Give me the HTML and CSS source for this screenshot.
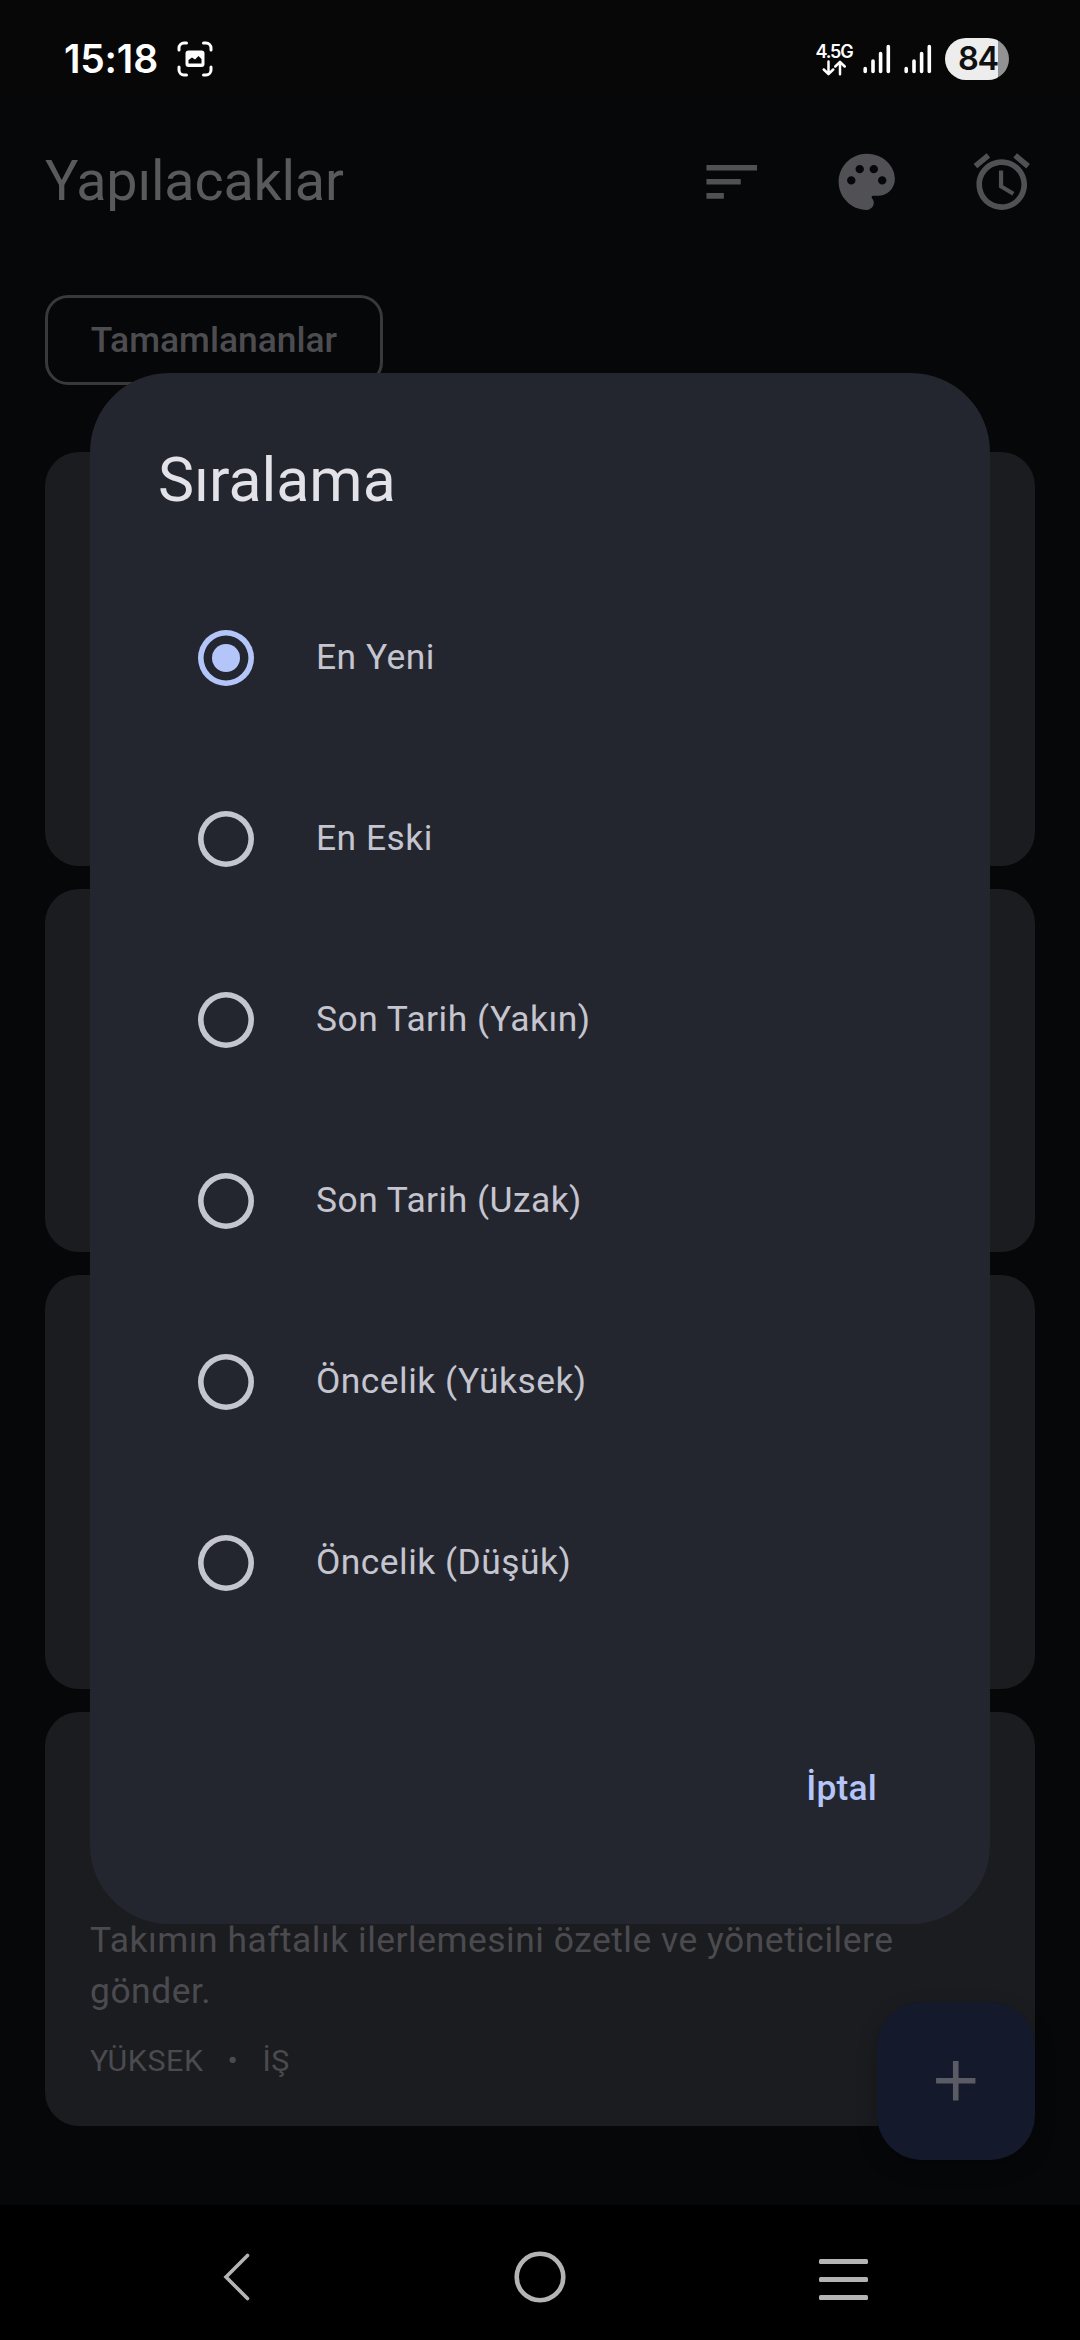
FILE: index.html
```html
<!DOCTYPE html>
<html lang="tr">
<head>
<meta charset="utf-8">
<title>Yapılacaklar</title>
<link rel="stylesheet" href="styles.css">
</head>
<body>
<div class="phone">
  <header class="status">
    <div class="status-left">
      <span class="clock">15:18</span>
      <svg class="capture" viewBox="0 0 36 36" width="36" height="36">
        <g fill="none" stroke="#fff" stroke-width="3" stroke-linecap="round">
          <path d="M2 9V7a5 5 0 0 1 5-5h2.500M26.500 2H29a5 5 0 0 1 5 5v2M34 26v3a5 5 0 0 1-5 5h-2.500M9.500 34H7a5 5 0 0 1-5-5v-3"/>
        </g>
        <rect x="8.500" y="9.500" width="19" height="16.500" rx="3" fill="#fff"/>
        <path d="M11.500 22.500v-3.500l3.500-2.500 3 2 3.500-3.500 3 3v4.500z" fill="#070707"/>
      </svg>
    </div>
    <div class="status-right">
      <div class="network">
        <span class="network-label">4.5G</span>
        <svg viewBox="0 0 24 16" width="24" height="16" fill="none" stroke="#fff" stroke-width="2.500" stroke-linecap="round" stroke-linejoin="round">
          <path d="M6.500 1.500v12M1.800 9.500l4.700 4.700 4.700-4.700M18 14.200V2.200M13.300 6.500L18 1.800l4.700 4.700"/>
        </svg>
      </div>
      <svg class="signal" viewBox="0 0 28 30" width="28" height="30" stroke="#fff" stroke-width="3.600" stroke-linecap="round">
        <path d="M2.200 24.500v3M10 17v10.500M17.600 9.500v18M25.300 2.500v25"/>
      </svg>
      <svg class="signal" viewBox="0 0 28 30" width="28" height="30" stroke="#fff" stroke-width="3.600" stroke-linecap="round">
        <path d="M2.200 24.500v3M10 17v10.500M17.600 9.500v18M25.300 2.500v25"/>
      </svg>
      <div class="battery">84</div>
    </div>
  </header>

  <main class="app">
    <div class="appbar">
      <h1 class="appbar-title">Yapılacaklar</h1>
      <div class="actions">
        <svg class="icon" viewBox="0 0 24 24"><path d="M3 18h6.200v-2H3v2zM3 6v2h18V6H3zm0 7h12.200v-2H3v2z"/></svg>
        <svg class="icon" viewBox="0 0 24 24"><path d="M12 2C6.490 2 2 6.490 2 12s4.490 10 10 10c1.380 0 2.500-1.120 2.500-2.500 0-.61-.23-1.200-.64-1.670-.08-.1-.13-.21-.13-.33 0-.28.22-.5.5-.5H16c3.310 0 6-2.690 6-6 0-4.960-4.490-9-10-9zm5.500 11c-.83 0-1.500-.67-1.500-1.500s.67-1.500 1.500-1.500 1.500.67 1.500 1.500-.67 1.500-1.500 1.500zm-3-4c-.83 0-1.500-.67-1.500-1.500S13.670 6 14.500 6s1.500.67 1.500 1.500S15.330 9 14.500 9zM5 11.500c0-.83.67-1.500 1.500-1.500s1.500.67 1.500 1.500S7.330 13 6.500 13 5 12.330 5 11.500zm6-4c0 .83-.67 1.500-1.500 1.500S8 8.330 8 7.500 8.670 6 9.500 6s1.500.67 1.500 1.500z"/></svg>
        <svg class="icon" viewBox="0 0 24 24"><path d="M22 5.720l-4.600-3.860-1.290 1.530 4.600 3.860L22 5.720zM7.880 3.390L6.600 1.860 2 5.710l1.290 1.530 4.590-3.850zM12.500 8H11v6l4.750 2.850.75-1.230-4-2.370V8zM12 4c-4.970 0-9 4.030-9 9s4.020 9 9 9c4.970 0 9-4.030 9-9s-4.030-9-9-9zm0 16c-3.870 0-7-3.130-7-7s3.130-7 7-7 7 3.130 7 7-3.130 7-7 7z"/></svg>
      </div>
    </div>
    <div class="filters"><span class="chip">Tamamlananlar</span></div>
    <section class="cards">
      <article class="card"></article>
      <article class="card card-short"></article>
      <article class="card"></article>
      <article class="card">
        <p class="card-text">Takımın haftalık ilerlemesini özetle ve yöneticilere gönder.</p>
        <div class="card-meta"><span>YÜKSEK</span><span>•</span><span>İŞ</span></div>
      </article>
    </section>
  </main>

  <nav class="navbar">
    <svg class="nav-back" viewBox="0 0 28 48" width="28" height="48"><path d="M24.500 2.500L3 24l21.500 21.500" fill="none" stroke="#b4b4b4" stroke-width="3.600" stroke-linecap="round"/></svg>
    <svg class="nav-home" viewBox="0 0 52 52" width="52" height="52"><circle cx="26" cy="26" r="23.300" fill="none" stroke="#b4b4b4" stroke-width="4.600"/></svg>
    <svg class="nav-menu" viewBox="0 0 49 42" width="49" height="42" fill="#b4b4b4"><rect y="0" width="49" height="5" rx="1.500"/><rect y="18" width="49" height="5" rx="1.500"/><rect y="36" width="49" height="5" rx="1.500"/></svg>
  </nav>

  <button class="fab"><svg class="icon" viewBox="0 0 24 24"><path d="M19 13h-6v6h-2v-6H5v-2h6V5h2v6h6v2z"/></svg></button>

  <div class="dialog">
    <h2 class="dialog-title">Sıralama</h2>
    <div class="options">
      <div class="option"><span class="radio radio-on"></span><span class="option-label">En Yeni</span></div>
      <div class="option"><span class="radio"></span><span class="option-label">En Eski</span></div>
      <div class="option"><span class="radio"></span><span class="option-label">Son Tarih (Yakın)</span></div>
      <div class="option"><span class="radio"></span><span class="option-label">Son Tarih (Uzak)</span></div>
      <div class="option"><span class="radio"></span><span class="option-label">Öncelik (Yüksek)</span></div>
      <div class="option"><span class="radio"></span><span class="option-label">Öncelik (Düşük)</span></div>
    </div>
    <div class="dialog-actions"><span class="text-button">İptal</span></div>
  </div>
</div>
</body>
</html>
```
FILE: styles.css
```css
* { box-sizing: border-box; }

body {
  margin: 0;
  background: #000;
  font-family: Roboto, "Noto Sans", sans-serif;
}

h1, h2, p { margin: 0; font-weight: 400; }

.phone {
  position: relative;
  display: flex;
  flex-direction: column;
  width: 1080px;
  height: 2340px;
  overflow: hidden;
  background: #060709;
}

/* Status bar */
.status {
  display: flex;
  justify-content: space-between;
  height: 92px;
  padding: 0 71px 0 64px;
  background: #070707;
  color: #fff;
  font-family: Inter, Roboto, sans-serif;
  font-weight: 600;
}

.status-left, .status-right { display: flex; align-items: center; height: 118px; }
.status-left { gap: 18px; }
.clock { width: 95px; font-size: 39px; line-height: 48px; white-space: nowrap; letter-spacing: -0.2px; }
.status-right { gap: 13px; }

.network { display: flex; flex-direction: column; align-items: center; width: 36px; margin-right: -2px; }
.network-label { font-size: 18px; line-height: 17px; letter-spacing: -1.2px; }

.battery {
  width: 64px;
  height: 42px;
  border-radius: 21px;
  background: linear-gradient(90deg, #ededed 53px, #929292 53px);
  color: #101010;
  font-size: 32.5px;
  line-height: 42px;
  padding-left: 13px;
  letter-spacing: -1.2px;
}

/* App */
.app { flex: 1; }

.appbar {
  display: flex;
  align-items: center;
  justify-content: space-between;
  height: 180px;
  padding: 0 45px;
}

.appbar-title { color: #5a5a5c; font-size: 55.7px; line-height: 71px; letter-spacing: -0.2px; padding-bottom: 1px; }
.actions { display: flex; gap: 67.5px; }
.icon { display: block; width: 67.5px; height: 67.5px; fill: #515155; }

.filters { display: flex; padding: 23px 45px 0; }

.chip {
  width: 338px;
  height: 90px;
  border: 3px solid #39393b;
  border-radius: 23px;
  color: #4d4d51;
  font-size: 35.4px;
  font-weight: 500;
  line-height: 84px;
  text-align: center;
}

.cards {
  display: flex;
  flex-direction: column;
  gap: 23px;
  padding: 67px 45px 0;
}

.card {
  display: flex;
  flex-direction: column;
  justify-content: flex-end;
  gap: 23px;
  height: 414px;
  padding: 45px;
  border-radius: 34px;
  background: #1b1c1f;
  color: #4b4b4f;
}

.card-short { height: 363px; }
.card-text { font-size: 35.4px; line-height: 51px; letter-spacing: 0.52px; }
.card-meta { display: flex; gap: 24px; font-size: 30.4px; line-height: 41px; letter-spacing: 0.6px; }

.fab {
  position: absolute;
  right: 45px;
  bottom: 180px;
  display: grid;
  place-items: center;
  width: 158px;
  height: 158px;
  padding: 0;
  border: 0;
  border-radius: 45px;
  background: #14192b;
  box-shadow: 0 8px 20px rgba(0, 0, 0, 0.25);
}

.fab .icon { fill: #5a5b65; }

/* System navigation */
.navbar {
  display: flex;
  align-items: center;
  justify-content: space-between;
  height: 135px;
  padding: 8px 212px 0 223px;
  background: #000;
}

.nav-home { margin-left: 9px; }
.nav-menu { margin-top: 7px; }

/* Dialog */
.dialog {
  position: absolute;
  left: 90px;
  top: 373px;
  display: flex;
  flex-direction: column;
  width: 900px;
  height: 1551px;
  padding: 67px 68px 101px;
  border-radius: 79px;
  background: #24262f;
}

.dialog-title { color: #e3e2e9; font-size: 60.75px; line-height: 81px; }
.options { padding: 46px 40px 0; }
.option { display: flex; align-items: center; gap: 62px; height: 181px; }

.radio {
  display: grid;
  place-items: center;
  width: 56px;
  height: 56px;
  color: #c5c5cf;
  border-radius: 50%;
  box-shadow: inset 0 0 0 5.6px currentColor;
}

.radio-on { color: #b4c5fa; }
.radio-on::after { content: ""; width: 28px; height: 28px; border-radius: 50%; background: currentColor; }

.option-label { color: #c5c5cf; font-size: 35.4px; line-height: 51px; letter-spacing: 0.48px; }

.dialog-actions { display: flex; justify-content: flex-end; margin-top: auto; padding: 0 45px 9px; }
.text-button { color: #b4c5fa; font-size: 35.4px; font-weight: 500; line-height: 51px; letter-spacing: 0.2px; }
```
